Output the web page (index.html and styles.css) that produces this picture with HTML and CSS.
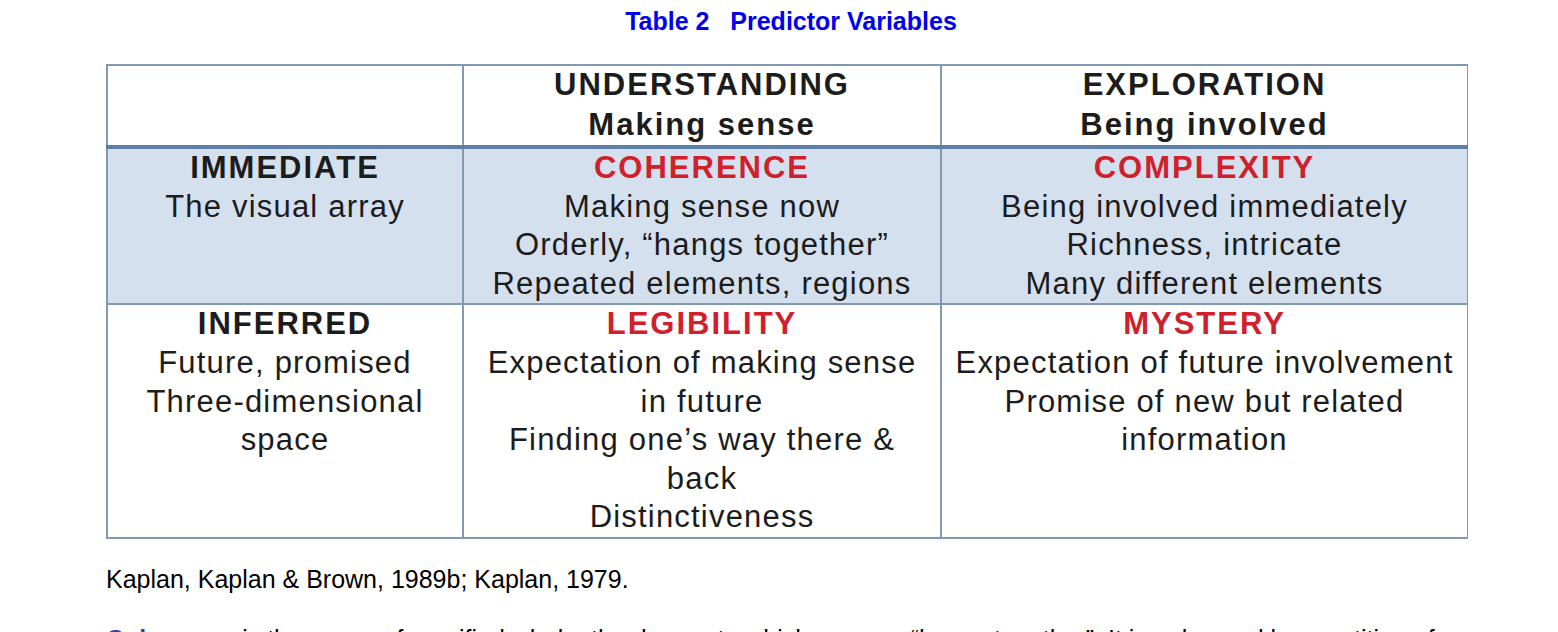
FILE: index.html
```html
<!DOCTYPE html>
<html lang="en">
<head>
<meta charset="utf-8">
<title>Table 2 Predictor Variables</title>
<link rel="stylesheet" href="styles.css">
</head>
<body>
<main class="page">
  <h2 class="caption">Table 2&nbsp;&nbsp;&nbsp;Predictor Variables</h2>
  <table class="grid">
    <colgroup>
      <col class="c1">
      <col class="c2">
      <col class="c3">
    </colgroup>
    <thead>
      <tr>
        <th class="blank"></th>
        <th><span class="b">UNDERSTANDING</span><br><span class="b">Making sense</span></th>
        <th><span class="b">EXPLORATION</span><br><span class="b">Being involved</span></th>
      </tr>
    </thead>
    <tbody>
      <tr class="shaded">
        <td><span class="b">IMMEDIATE</span><br>The visual array</td>
        <td><span class="red">COHERENCE</span><br>Making sense now<br>Orderly, “hangs together”<br>Repeated elements, regions</td>
        <td><span class="red">COMPLEXITY</span><br>Being involved immediately<br>Richness, intricate<br>Many different elements</td>
      </tr>
      <tr>
        <td><span class="b">INFERRED</span><br>Future, promised<br>Three-dimensional<br>space</td>
        <td><span class="red">LEGIBILITY</span><br>Expectation of making sense<br>in future<br>Finding one’s way there &amp;<br>back<br>Distinctiveness</td>
        <td><span class="red">MYSTERY</span><br>Expectation of future involvement<br>Promise of new but related<br>information</td>
      </tr>
    </tbody>
  </table>
  <p class="cite">Kaplan, Kaplan &amp; Brown, 1989b; Kaplan, 1979.</p>
  <p class="para"><a class="term" href="#">Coherence</a> is the sense of a unified whole, the degree to which a scene “hangs together”. It is enhanced by repetition of</p>
</main>
</body>
</html>
```
FILE: styles.css
```css
html, body {
  margin: 0;
  padding: 0;
  background: #ffffff;
}

.page {
  width: 1362px;
  padding: 6px 0 0 106px;
  font-family: "Liberation Sans", Arial, sans-serif;
  color: #000000;
  height: 626px;
  overflow: hidden;
}

.caption {
  margin: 0 0 28px 0;
  padding-left: 8px;
  text-align: center;
  font-size: 25px;
  line-height: 30px;
  font-weight: bold;
  color: #0000f0;
}

.grid {
  width: 1361px;
  table-layout: fixed;
  border-collapse: collapse;
  font-family: "Liberation Sans", Arial, sans-serif;
  font-size: 31px;
  letter-spacing: 1.2px;
  color: #1c1c1c;
}

.c1 { width: 356px; }
.c2 { width: 478px; }
.c3 { width: 527px; }

.grid th,
.grid td {
  border: 2px solid #8199b7;
  padding: 0;
  text-align: center;
  vertical-align: top;
  font-weight: normal;
}

.grid th {
  line-height: 39.5px;
  border-bottom: 4px solid #5d7fa7;
  background: #ffffff;
}

.grid th span {
  position: relative;
  top: -1px;
}

.grid td {
  line-height: 38.6px;
}

.shaded td {
  background: #d5e0ef;
}

.b {
  font-weight: bold;
  letter-spacing: 2px;
}

.red {
  font-weight: bold;
  letter-spacing: 2px;
  color: #d0202c;
}

.cite {
  margin: 25px 0 0 0;
  font-size: 25px;
  line-height: 30px;
  color: #000000;
}

.para {
  margin: 30px 0 0 0;
  font-size: 25px;
  line-height: 30px;
  color: #000000;
  white-space: nowrap;
}

.term {
  color: #3b3ba6;
  font-weight: bold;
  text-decoration: none;
}
```
